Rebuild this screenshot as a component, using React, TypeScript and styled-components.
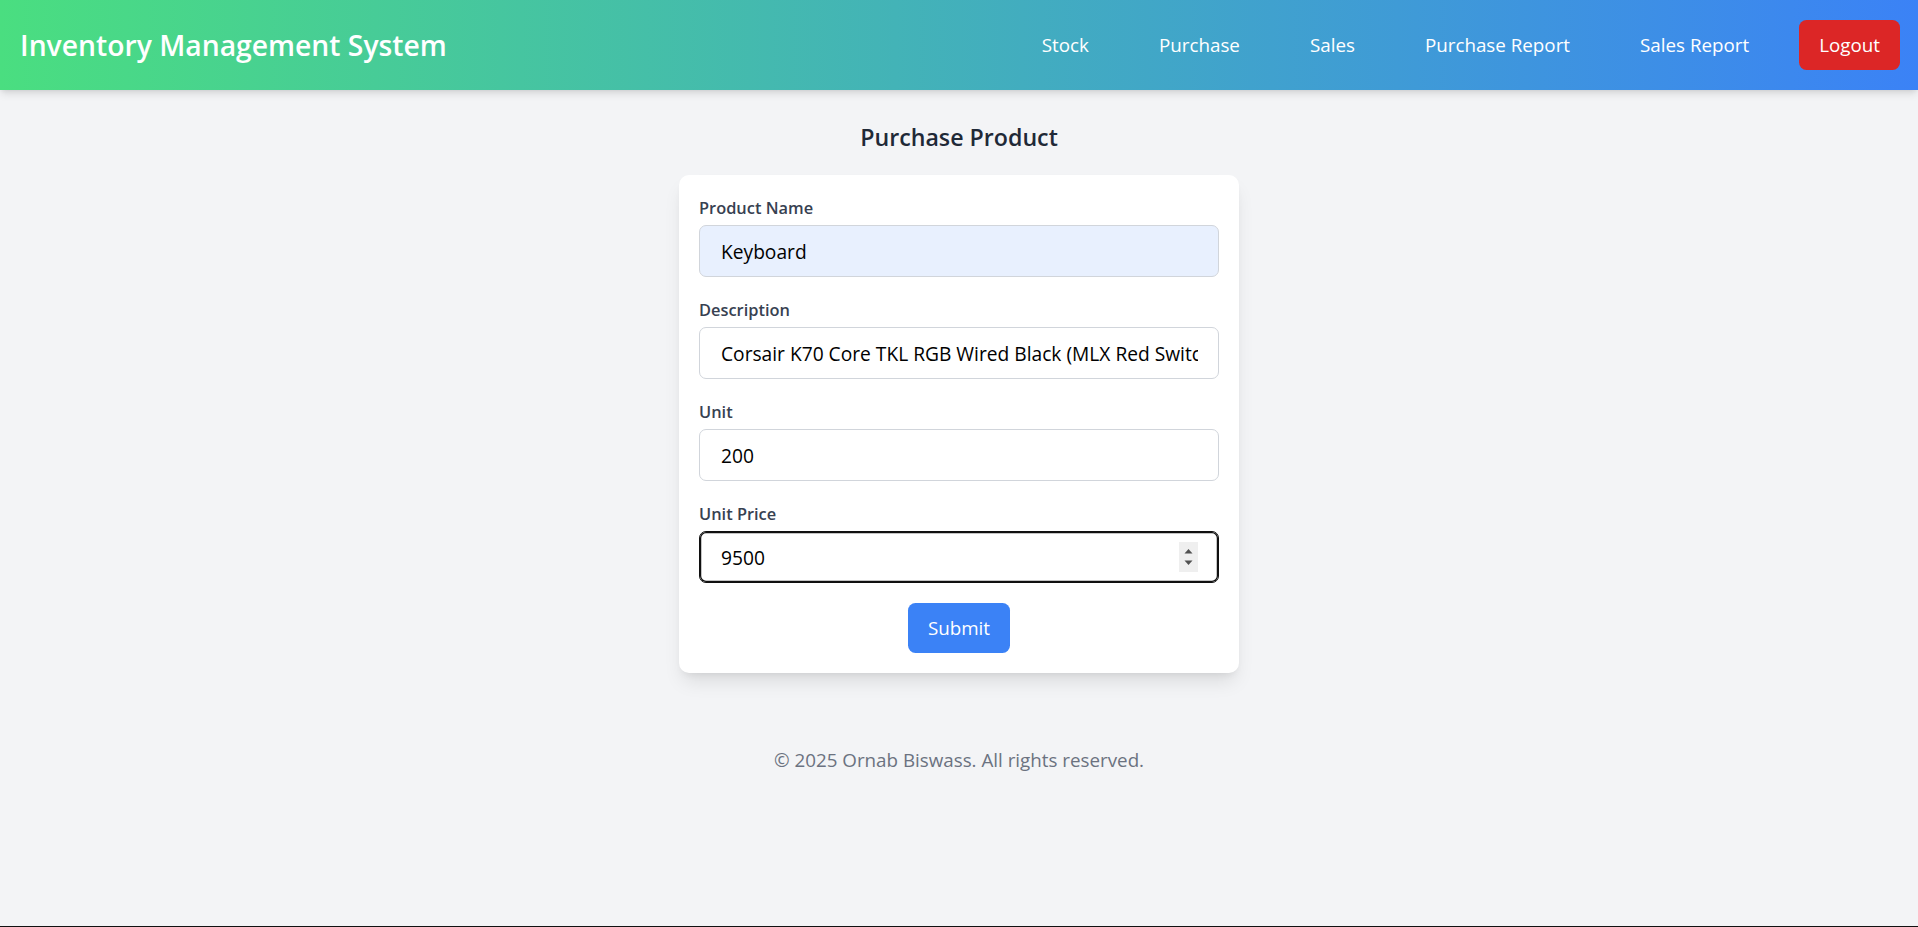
import styled, { createGlobalStyle } from "styled-components";

const GlobalStyle = createGlobalStyle`
  * {
    box-sizing: border-box;
  }
  body {
    margin: 0;
    background: #f3f4f6;
    font-family: "Open Sans", "Noto Sans", sans-serif;
  }
`;

const S = {
  Page: styled.div`
    min-height: 100vh;
    display: flex;
    flex-direction: column;
    border-bottom: 1px solid #111;
  `,
  Header: styled.header`
    display: flex;
    justify-content: space-between;
    align-items: center;
    padding: 20px 18px 20px 20px;
    background: linear-gradient(90deg, #4ade80 0%, #3b82f6 100%);
    box-shadow: 0 5px 8px -1px rgba(0, 0, 0, 0.1),
      0 2px 5px -2px rgba(0, 0, 0, 0.1);
  `,
  Title: styled.h1`
    margin: 0;
    color: #fff;
    font-size: 28.3px;
    line-height: 40px;
    font-weight: 600;
  `,
  Nav: styled.nav`
    display: flex;
    align-items: center;
    gap: 30px;
  `,
  NavLink: styled.a`
    padding: 0 20px;
    color: #fff;
    font-size: 18.8px;
    line-height: 30px;
    text-decoration: none;
    cursor: pointer;
  `,
  LogoutButton: styled.button`
    padding: 10px 20px;
    border: none;
    border-radius: 7.5px;
    background: #dc2626;
    color: #fff;
    font-family: inherit;
    font-size: 18.8px;
    line-height: 30px;
    cursor: pointer;
  `,
  Main: styled.main`
    display: flex;
    flex-direction: column;
    align-items: center;
    padding: 30px 0;
  `,
  Heading: styled.h2`
    margin: 0 0 20px;
    color: #1f2937;
    font-size: 23.2px;
    line-height: 35px;
    font-weight: 600;
  `,
  Card: styled.form`
    width: 560px;
    padding: 20px;
    background: #fff;
    border-radius: 10px;
    box-shadow: 0 12px 19px -4px rgba(0, 0, 0, 0.1),
      0 5px 8px -5px rgba(0, 0, 0, 0.1);
  `,
  Field: styled.div`
    margin-bottom: 20px;
  `,
  Label: styled.label`
    display: block;
    margin-bottom: 5px;
    color: #374151;
    font-size: 16.4px;
    line-height: 25px;
    font-weight: 600;
  `,
  InputWrap: styled.div`
    position: relative;
  `,
  Input: styled.input<{ $autofill?: boolean; $focused?: boolean }>`
    display: block;
    width: 100%;
    height: 52px;
    padding: 10px 20px 10px 21px;
    border: 1.25px solid ${(p) => (p.$focused ? "#101010" : "#d1d5db")};
    border-radius: 7px;
    background: ${(p) => (p.$autofill ? "#e8f0fe" : "#fff")};
    box-shadow: ${(p) => (p.$focused ? "inset 0 0 0 1.25px #101010" : "none")};
    color: #000;
    font-family: inherit;
    font-size: 19.2px;
    line-height: 30px;
    outline: none;
  `,
  Spinner: styled.div`
    position: absolute;
    top: 50%;
    right: 21px;
    width: 19px;
    height: 30px;
    margin-top: -15px;
    display: flex;
    align-items: center;
    justify-content: center;
    background: #efefef;
  `,
  Actions: styled.div`
    display: flex;
    justify-content: center;
  `,
  SubmitButton: styled.button`
    padding: 10px 20px;
    border: none;
    border-radius: 7.5px;
    background: #3b82f6;
    color: #fff;
    font-family: inherit;
    font-size: 18.8px;
    line-height: 30px;
    cursor: pointer;
  `,
  Footer: styled.footer`
    margin-top: 12px;
    padding: 30px 0;
    text-align: center;
    color: #6b7280;
    font-size: 18.8px;
    line-height: 30px;
  `,
};

const links = ["Stock", "Purchase", "Sales", "Purchase Report", "Sales Report"];

const fields = [
  { label: "Product Name", value: "Keyboard", autofill: true },
  {
    label: "Description",
    value: "Corsair K70 Core TKL RGB Wired Black (MLX Red Switch)",
  },
  { label: "Unit", value: "200" },
  { label: "Unit Price", value: "9500", focused: true },
];

const SpinArrows = () => (
  <svg width="9" height="20" viewBox="0 0 9 20">
    <path d="M0.5 6.5 L4.5 2 L8.5 6.5 Z" fill="#505050" />
    <path d="M0.5 13.5 L4.5 18 L8.5 13.5 Z" fill="#505050" />
  </svg>
);

export default function App() {
  return (
    <S.Page>
      <GlobalStyle />
      <S.Header>
        <S.Title>Inventory Management System</S.Title>
        <S.Nav>
          {links.map((l) => (
            <S.NavLink key={l}>{l}</S.NavLink>
          ))}
          <S.LogoutButton>Logout</S.LogoutButton>
        </S.Nav>
      </S.Header>

      <S.Main>
        <S.Heading>Purchase Product</S.Heading>
        <S.Card onSubmit={(e) => e.preventDefault()}>
          {fields.map((f) => (
            <S.Field key={f.label}>
              <S.Label>{f.label}</S.Label>
              <S.InputWrap>
                <S.Input
                  defaultValue={f.value}
                  $autofill={f.autofill}
                  $focused={f.focused}
                />
                {f.focused ? (
                  <S.Spinner>
                    <SpinArrows />
                  </S.Spinner>
                ) : null}
              </S.InputWrap>
            </S.Field>
          ))}
          <S.Actions>
            <S.SubmitButton type="submit">Submit</S.SubmitButton>
          </S.Actions>
        </S.Card>
      </S.Main>

      <S.Footer>© 2025 Ornab Biswass. All rights reserved.</S.Footer>
    </S.Page>
  );
}
